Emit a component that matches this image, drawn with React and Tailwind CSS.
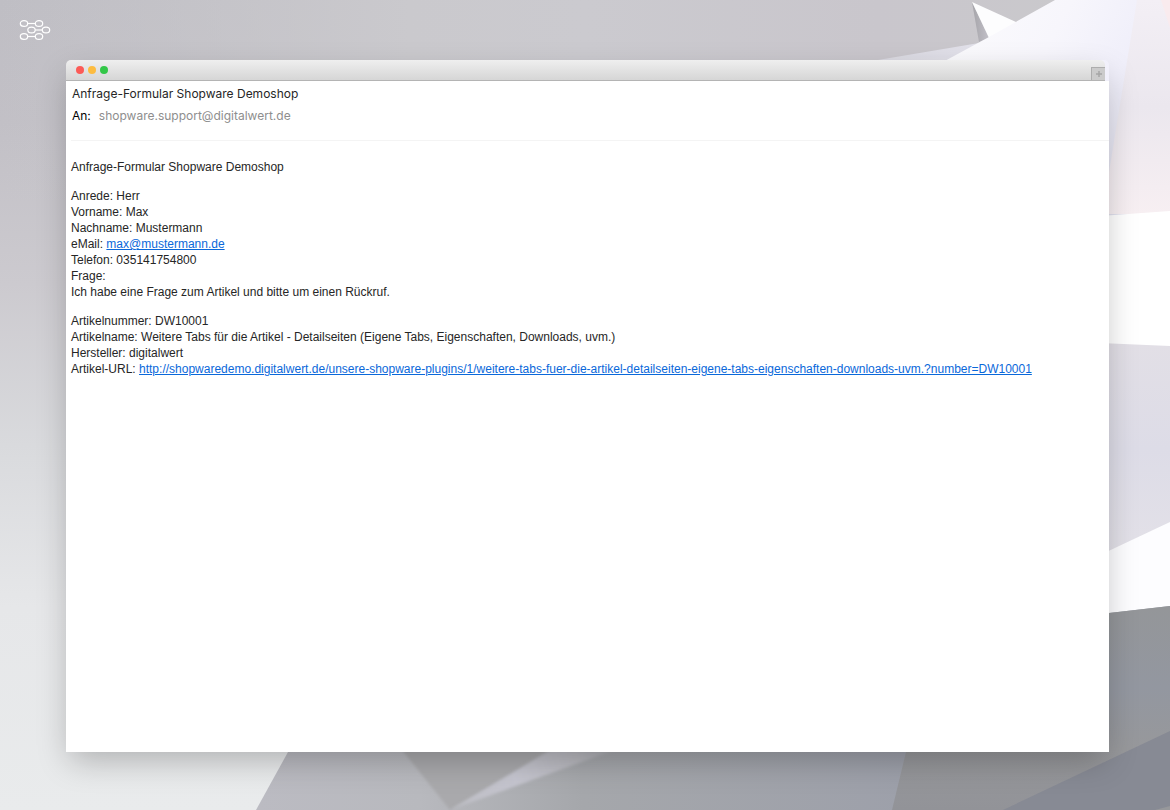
const details = [
  ["Artikelnummer:", "DW10001"],
  ["Artikelname:", "Weitere Tabs für die Artikel - Detailseiten (Eigene Tabs, Eigenschaften, Downloads, uvm.)"],
  ["Hersteller:", "digitalwert"],
];

const productUrl =
  "http://shopwaredemo.digitalwert.de/unsere-shopware-plugins/1/weitere-tabs-fuer-die-artikel-detailseiten-eigene-tabs-eigenschaften-downloads-uvm.?number=DW10001";

function Wallpaper() {
  return (
    <svg
      className="absolute inset-0 -z-10 h-full w-full"
      viewBox="0 0 1170 810"
      preserveAspectRatio="none"
      aria-hidden="true"
    >
      <defs>
        <linearGradient id="base" x1="0" y1="0" x2="0" y2="1">
          <stop offset="0" stopColor="#bfbec4" />
          <stop offset="0.15" stopColor="#c2c0c6" />
          <stop offset="0.35" stopColor="#cccacf" />
          <stop offset="0.55" stopColor="#d9dadd" />
          <stop offset="0.75" stopColor="#e6e7e9" />
          <stop offset="1" stopColor="#e9ebec" />
        </linearGradient>
        <linearGradient id="topLight" x1="0" y1="0" x2="1" y2="0">
          <stop offset="0" stopColor="#cac9cd" stopOpacity="0" />
          <stop offset="0.35" stopColor="#cac9cd" />
          <stop offset="0.5" stopColor="#cbcacf" />
          <stop offset="0.75" stopColor="#c9c6cc" />
          <stop offset="1" stopColor="#cacacc" />
        </linearGradient>
        <linearGradient id="wing" x1="930" y1="0" x2="1150" y2="120" gradientUnits="userSpaceOnUse">
          <stop offset="0" stopColor="#fcfcfd" />
          <stop offset="0.5" stopColor="#f7f6fc" />
          <stop offset="0.8" stopColor="#f0effa" />
          <stop offset="1" stopColor="#e0e0ed" />
        </linearGradient>
        <linearGradient id="underWing" x1="0" y1="0" x2="1" y2="0">
          <stop offset="0" stopColor="#d9d8e0" />
          <stop offset="1" stopColor="#e9e8f2" />
        </linearGradient>
        <linearGradient id="rose" x1="0" y1="0" x2="0" y2="1">
          <stop offset="0" stopColor="#f3eff5" />
          <stop offset="0.5" stopColor="#ebe7ee" />
          <stop offset="1" stopColor="#f7eff2" />
        </linearGradient>
        <linearGradient id="lilac" x1="0" y1="0" x2="0" y2="1">
          <stop offset="0" stopColor="#e2dfe6" />
          <stop offset="0.5" stopColor="#dddce7" />
          <stop offset="1" stopColor="#e3e1e8" />
        </linearGradient>
        <linearGradient id="spike" x1="0" y1="0" x2="1" y2="0">
          <stop offset="0" stopColor="#a5a4a9" />
          <stop offset="1" stopColor="#c2c0c8" />
        </linearGradient>
        <linearGradient id="floor" x1="256" y1="0" x2="910" y2="0" gradientUnits="userSpaceOnUse">
          <stop offset="0" stopColor="#bbbbc2" />
          <stop offset="0.25" stopColor="#b8b9be" />
          <stop offset="0.5" stopColor="#a5a7ab" />
          <stop offset="1" stopColor="#9da0aa" />
        </linearGradient>
        <linearGradient id="slab" x1="0" y1="606" x2="0" y2="810" gradientUnits="userSpaceOnUse">
          <stop offset="0" stopColor="#949699" />
          <stop offset="0.4" stopColor="#9397a0" />
          <stop offset="0.7" stopColor="#97989b" />
          <stop offset="1" stopColor="#929398" />
        </linearGradient>
        <linearGradient id="beam" x1="450" y1="810" x2="620" y2="750" gradientUnits="userSpaceOnUse">
          <stop offset="0" stopColor="#bcbcc2" />
          <stop offset="0.4" stopColor="#c6c6d0" />
          <stop offset="0.75" stopColor="#b9b9bf" />
          <stop offset="1" stopColor="#a9abb0" />
        </linearGradient>
        <filter id="soft" x="-10%" y="-20%" width="120%" height="140%">
          <feGaussianBlur stdDeviation="1.8" />
        </filter>
      </defs>
      <rect width="1170" height="810" fill="url(#base)" />
      <rect width="1170" height="200" fill="url(#topLight)" />
      <polygon points="872,61 985,42 1060,40 1060,100 872,100" fill="url(#underWing)" />
      <polygon points="972,2 989,38 979,42" fill="url(#spike)" />
      <polygon points="972,2 1016,22 1020,60 989,38" fill="#fdfdfe" />
      <polygon points="1055,0 1170,0 1170,220 930,220 930,69 989,37" fill="url(#wing)" />
      <polygon points="1137,0 1170,0 1170,214 1109,214 1109,172" fill="url(#rose)" />
      <polygon points="1161,0 1170,0 1170,28" fill="#f9ebee" />
      <polygon points="1100,216 1170,211 1170,350 1100,350" fill="#ffffff" />
      <polygon points="1100,343 1170,346 1170,522 1100,556" fill="url(#lilac)" />
      <polygon points="1100,555 1170,522 1170,610 1100,620" fill="#fdfdff" />
      <polygon points="288,752 1109,613 1170,606 1170,810 256,810" fill="url(#floor)" />
      <polygon points="390,735 580,735 450,810" fill="#a9a9ac" filter="url(#soft)" />
      <polygon points="572,737 650,737 450,810" fill="url(#beam)" filter="url(#soft)" />
      <polygon points="906,752 1109,613 1170,606 1170,810 892,810" fill="url(#slab)" />
      <polygon points="1170,731 1170,810 1003,810" fill="#878a94" />
      <polygon points="1170,806 1170,810 1155,810" fill="#97989b" />
    </svg>
  );
}

function Logo() {
  return (
    <svg className="h-6 w-8" viewBox="0 0 32 24" fill="none" stroke="#fff" strokeWidth="1.2" role="img" aria-label="digitalwert">
      <ellipse cx="5" cy="5.5" rx="3.7" ry="2.9" />
      <ellipse cx="20" cy="5.5" rx="3.7" ry="2.9" />
      <path d="M8.700 5.500H16.300" />
      <ellipse cx="12.500" cy="12" rx="3.700" ry="2.900" />
      <ellipse cx="27" cy="12" rx="3.700" ry="2.900" />
      <path d="M16.200 12H23.300" />
      <ellipse cx="5" cy="18.500" rx="3.700" ry="2.900" />
      <ellipse cx="20" cy="18.500" rx="3.700" ry="2.900" />
      <path d="M8.700 18.500H16.300" />
    </svg>
  );
}

export default function App() {
  return (
    <div className="relative isolate flex min-h-screen flex-col overflow-hidden pr-[61px] pb-[58px] pl-[66px] font-['Liberation_Sans',Arial,sans-serif] text-xs text-[#262626]">
      <Wallpaper />
      <header className="-ml-[47px] flex h-[60px] items-center">
        <Logo />
      </header>
      <main className="flex grow flex-col rounded-t-[5px] shadow-[0_12px_32px_-4px_rgba(0,0,0,0.25)]">
        <div className="mr-1 flex h-[21px] items-center rounded-t-[5px] border-b border-[#b4b4b4] bg-linear-to-b from-[#efefef] to-[#d6d6d6] pl-[10px]">
          <div className="flex gap-1">
            <button type="button" aria-label="Schließen" className="size-2 rounded-full bg-[#fc5b57]" />
            <button type="button" aria-label="Minimieren" className="size-2 rounded-full bg-[#fdbc40]" />
            <button type="button" aria-label="Maximieren" className="size-2 rounded-full bg-[#33c748]" />
          </div>
          <button
            type="button"
            aria-label="Neuer Tab"
            className="ml-auto flex h-[13px] w-[14px] items-center justify-center self-end border-t border-l border-[#adadad] bg-[#cbcbcb]"
          >
            <svg className="size-2" viewBox="0 0 8 8" stroke="#a6a6a6" strokeWidth="1.500" aria-hidden="true">
              <path d="M4 1V7M1 4H7" />
            </svg>
          </button>
        </div>
        <article className="grow bg-white pl-[5px]">
          <div className="border-b border-[#f4f4f4] pb-[13px] pl-px font-[Inter,sans-serif] leading-[22px]">
            <h1 className="pt-[2px]">Anfrage-Formular Shopware Demoshop</h1>
            <p className="flex gap-2">
              <span className="text-black">An:</span>
              <span className="text-[#8e8e8e]">shopware.support@digitalwert.de</span>
            </p>
          </div>
          <div className="flex flex-col gap-[13px] pt-[18px] leading-4">
            <p>Anfrage-Formular Shopware Demoshop</p>
            <div>
              <p>Anrede: Herr</p>
              <p>Vorname: Max</p>
              <p>Nachname: Mustermann</p>
              <p>
                eMail:{" "}
                <a href="mailto:max@mustermann.de" className="text-[#0a68da] underline">
                  max@mustermann.de
                </a>
              </p>
              <p>Telefon: 035141754800</p>
              <p>Frage:</p>
              <p>Ich habe eine Frage zum Artikel und bitte um einen Rückruf.</p>
            </div>
            <div>
              {details.map(([label, value]) => (
                <p key={label}>
                  {label} {value}
                </p>
              ))}
              <p>
                Artikel-URL:{" "}
                <a href={productUrl} className="text-[#0a68da] underline">
                  {productUrl}
                </a>
              </p>
            </div>
          </div>
        </article>
      </main>
    </div>
  );
}
